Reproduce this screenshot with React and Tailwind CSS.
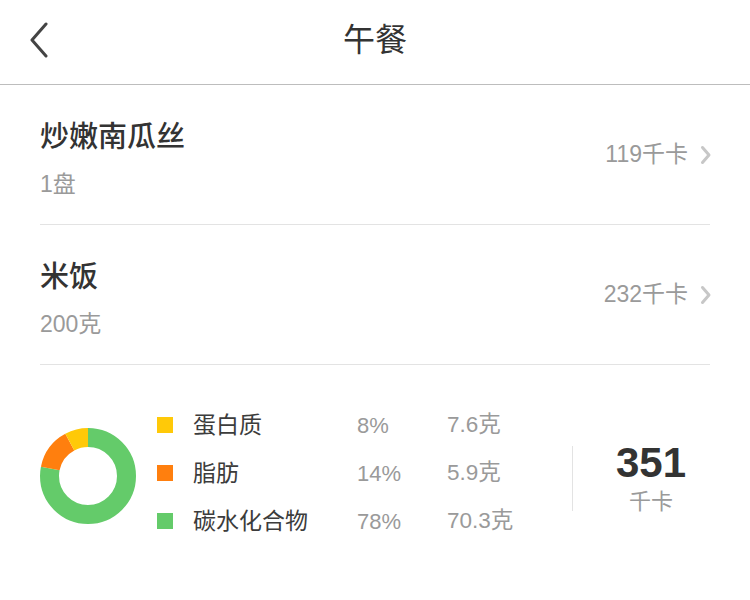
import React from "react";

const FONT = { fontFamily: '"Liberation Sans", "Noto Sans CJK SC", sans-serif' };

function BackIcon() {
  return (
    <svg width="20" height="36" viewBox="0 0 20 36" fill="none">
      <path d="M17 2 L3 18 L17 34" stroke="#444" strokeWidth="3" strokeLinecap="round" strokeLinejoin="round" />
    </svg>
  );
}

function Chevron() {
  return (
    <svg width="12" height="20" viewBox="0 0 12 20" fill="none">
      <path d="M2.5 2.5 L9 10 L2.5 17.5" stroke="#c7c7c7" strokeWidth="3" strokeLinecap="round" strokeLinejoin="round" />
    </svg>
  );
}

function Donut() {
  const r = 38.5;
  const c = 2 * Math.PI * r;
  const segs = [
    { p: 0.78, color: "#64cb6a" },
    { p: 0.14, color: "#ff7f0e" },
    { p: 0.08, color: "#ffc908" },
  ];
  let offset = 0;
  return (
    <svg width="96" height="96" viewBox="0 0 96 96">
      <g transform="rotate(-90 48 48)">
        {segs.map((s, i) => {
          const el = (
            <circle
              key={i}
              cx="48"
              cy="48"
              r={r}
              fill="none"
              stroke={s.color}
              strokeWidth="19"
              strokeDasharray={`${s.p * c} ${c}`}
              strokeDashoffset={-offset * c}
            />
          );
          offset += s.p;
          return el;
        })}
      </g>
    </svg>
  );
}

function FoodItem({ name, amount, kcal }) {
  return (
    <div className="flex items-center justify-between border-b border-[#e3e3e3]">
      <div className="flex flex-col pt-[32px] pb-[20px]">
        <div className="text-[29px] leading-[40px] font-medium text-[#333]">{name}</div>
        <div className="mt-[7px] text-[23px] leading-[40px] text-[#9a9a9a]">{amount}</div>
      </div>
      <div className="flex items-center gap-[12px] mr-[-2px]">
        <span className="text-[23px] text-[#9a9a9a]">{kcal}千卡</span>
        <Chevron />
      </div>
    </div>
  );
}

const nutrients = [
  { name: "蛋白质", pct: "8%", g: "7.6克", color: "bg-[#ffc908]" },
  { name: "脂肪", pct: "14%", g: "5.9克", color: "bg-[#ff7f0e]" },
  { name: "碳水化合物", pct: "78%", g: "70.3克", color: "bg-[#64cb6a]" },
];

export default function App() {
  return (
    <div className="w-[750px] h-[600px] bg-white overflow-hidden" style={FONT}>
      <div className="h-[85px] grid grid-cols-[1fr_auto_1fr] items-center border-b border-[#bdbdbd]">
        <div className="pl-[29px] flex items-center pb-[4px]">
          <BackIcon />
        </div>
        <div className="text-[32px] text-[#333] pb-[5px]">午餐</div>
        <div />
      </div>
      <div className="px-[40px]">
        <FoodItem name="炒嫩南瓜丝" amount="1盘" kcal="119" />
        <FoodItem name="米饭" amount="200克" kcal="232" />
      </div>
      <div className="flex items-center pl-[40px] h-[222px]">
        <Donut />
        <div className="ml-[21px] flex flex-col mt-[-6px]">
          {nutrients.map((n) => (
            <div key={n.name} className="flex items-center h-[48px]">
              <div className={`w-[16px] h-[16px] ${n.color}`} />
              <div className="ml-[20px] w-[164px] text-[23px] text-[#3c3c3c]">{n.name}</div>
              <div className="w-[90px] text-[22px] text-[#9a9a9a]">{n.pct}</div>
              <div className="w-[125px] text-[22.5px] text-[#9a9a9a]">{n.g}</div>
            </div>
          ))}
        </div>
        <div className="w-px h-[65px] bg-[#e3e3e3] mt-[4px]" />
        <div className="w-[156px] flex flex-col items-center mt-[4px]">
          <div className="text-[42px] leading-[48px] font-bold text-[#333]">351</div>
          <div className="text-[22px] leading-[30px] text-[#9a9a9a]">千卡</div>
        </div>
      </div>
    </div>
  );
}
